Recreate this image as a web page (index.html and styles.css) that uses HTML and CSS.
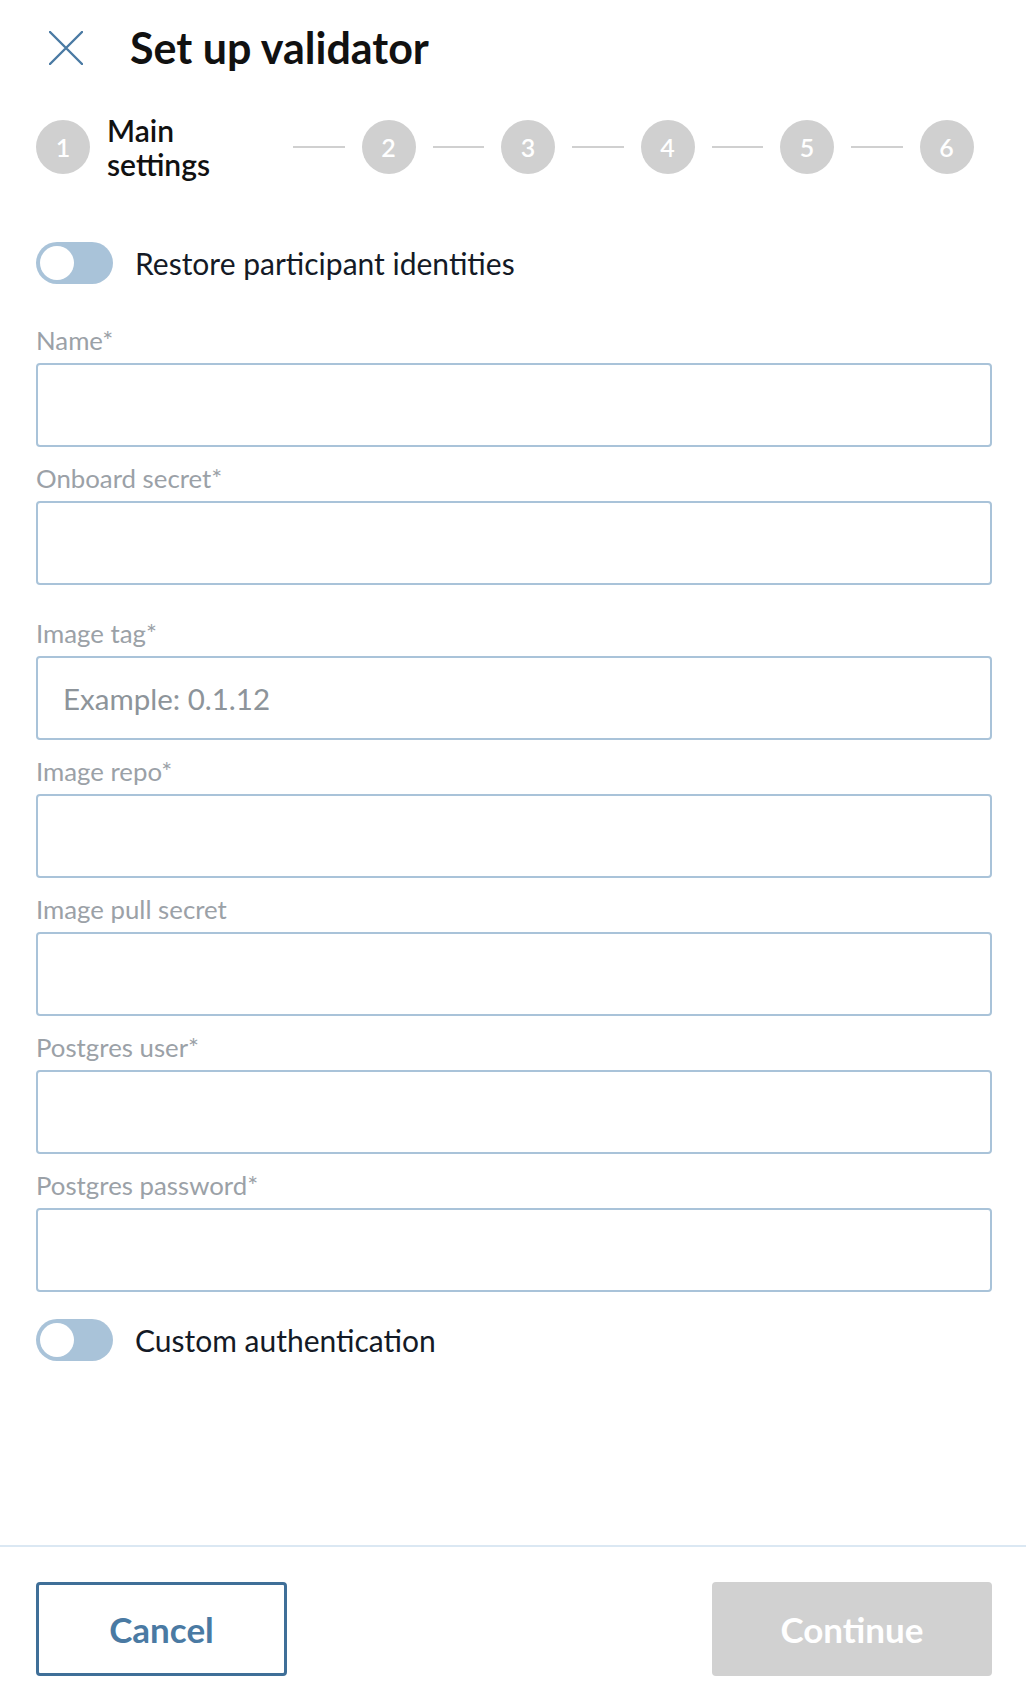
FILE: index.html
```html
<!DOCTYPE html>
<html lang="en">
<head>
<meta charset="utf-8">
<title>Set up validator</title>
<link rel="stylesheet" href="styles.css">
</head>
<body>
<div class="page">
  <header class="header">
    <button class="close" aria-label="Close">
      <svg width="34" height="34" viewBox="0 0 34 34"><path d="M1 1 L33 33 M33 1 L1 33" stroke="#4a7aa3" stroke-width="2.4" stroke-linecap="round" fill="none"/></svg>
    </button>
    <h1 class="title">Set up validator</h1>
  </header>

  <div class="stepper">
    <div class="step-first">
      <span class="circle">1</span>
      <span class="step-label">Main<br>settings</span>
    </div>
    <span class="line"></span><span class="circle">2</span>
    <span class="line"></span><span class="circle">3</span>
    <span class="line"></span><span class="circle">4</span>
    <span class="line"></span><span class="circle">5</span>
    <span class="line"></span><span class="circle">6</span>
  </div>

  <main class="form">
    <div class="toggle-row toggle-top">
      <span class="toggle"><span class="knob"></span></span>
      <span class="toggle-text">Restore participant identities</span>
    </div>

    <div class="field">
      <label class="label">Name*</label>
      <div class="input"></div>
    </div>
    <div class="field">
      <label class="label">Onboard secret*</label>
      <div class="input"></div>
    </div>
    <div class="field field-wide">
      <label class="label">Image tag*</label>
      <div class="input"><span class="placeholder">Example: 0.1.12</span></div>
    </div>
    <div class="field">
      <label class="label">Image repo*</label>
      <div class="input"></div>
    </div>
    <div class="field">
      <label class="label">Image pull secret</label>
      <div class="input"></div>
    </div>
    <div class="field">
      <label class="label">Postgres user*</label>
      <div class="input"></div>
    </div>
    <div class="field">
      <label class="label">Postgres password*</label>
      <div class="input"></div>
    </div>

    <div class="toggle-row toggle-bottom">
      <span class="toggle"><span class="knob"></span></span>
      <span class="toggle-text">Custom authentication</span>
    </div>
  </main>

  <footer class="footer">
    <button class="btn btn-cancel">Cancel</button>
    <button class="btn btn-continue">Continue</button>
  </footer>
</div>
</body>
</html>
```

FILE: styles.css
```css
* { box-sizing: border-box; }

html, body {
  margin: 0;
  padding: 0;
  background: #ffffff;
}

body {
  font-family: Lato, "Open Sans", "Liberation Sans", sans-serif;
  color: #141a26;
}

.page {
  min-height: 1702px;
  display: flex;
  flex-direction: column;
}

.header {
  height: 95px;
  display: flex;
  align-items: center;
  padding-left: 49px;
}

.close {
  width: 34px;
  height: 34px;
  padding: 0;
  border: 0;
  background: none;
  display: flex;
}

.title {
  margin: 0 0 0 47px;
  font-size: 43px;
  font-weight: 700;
  color: #111111;
  line-height: 50px;
}

.stepper {
  margin-top: 25px;
  padding-left: 36px;
  display: flex;
  align-items: center;
  height: 54px;
}

.step-first {
  display: flex;
  align-items: center;
  width: 240px;
}

.circle {
  width: 54px;
  height: 54px;
  border-radius: 50%;
  background: #d0d0d0;
  color: #ffffff;
  font-size: 25px;
  font-weight: 600;
  display: flex;
  align-items: center;
  justify-content: center;
  flex: none;
}

.step-label {
  margin-left: 17px;
  font-size: 30px;
  font-weight: 600;
  line-height: 34px;
  color: #111111;
}

.line {
  width: 51.5px;
  height: 2px;
  background: #d0d0d0;
  margin: 0 17px;
  flex: none;
}

.form {
  flex: 1;
  padding: 0 34px 0 36px;
}

.toggle-row {
  display: flex;
  align-items: center;
}

.toggle-top { margin-top: 68px; }
.toggle-bottom { margin-top: 27px; }

.toggle {
  width: 77px;
  height: 42px;
  border-radius: 21px;
  background: #a9c3d9;
  display: flex;
  align-items: center;
  padding-left: 4px;
  flex: none;
}

.knob {
  width: 34px;
  height: 34px;
  border-radius: 50%;
  background: #ffffff;
}

.toggle-text {
  margin-left: 22px;
  font-size: 30px;
  line-height: 36px;
  color: #141a26;
}

.field {
  margin-top: 17px;
}

.toggle-top + .field { margin-top: 42px; }

.field-wide { margin-top: 34px; }

.label {
  display: block;
  font-size: 25.8px;
  line-height: 28px;
  color: #9ba1a7;
  margin-bottom: 9px;
}

.input {
  height: 84px;
  border: 2px solid #a9c3d9;
  border-radius: 4px;
  display: flex;
  align-items: center;
  padding-left: 25px;
}

.placeholder {
  font-size: 29.5px;
  color: #8d949a;
}

.footer {
  border-top: 2px solid #dbe8f3;
  padding: 35px 34px 26px 36px;
  display: flex;
  justify-content: space-between;
}

.btn {
  height: 94px;
  border-radius: 4px;
  font-family: Lato, "Open Sans", "Liberation Sans", sans-serif;
  font-size: 35px;
  font-weight: 700;
}

.btn-cancel {
  width: 251px;
  background: #ffffff;
  border: 3px solid #3f6f98;
  color: #4a7aa3;
}

.btn-continue {
  width: 280px;
  background: #d1d1d1;
  border: 0;
  color: #ffffff;
}
```
